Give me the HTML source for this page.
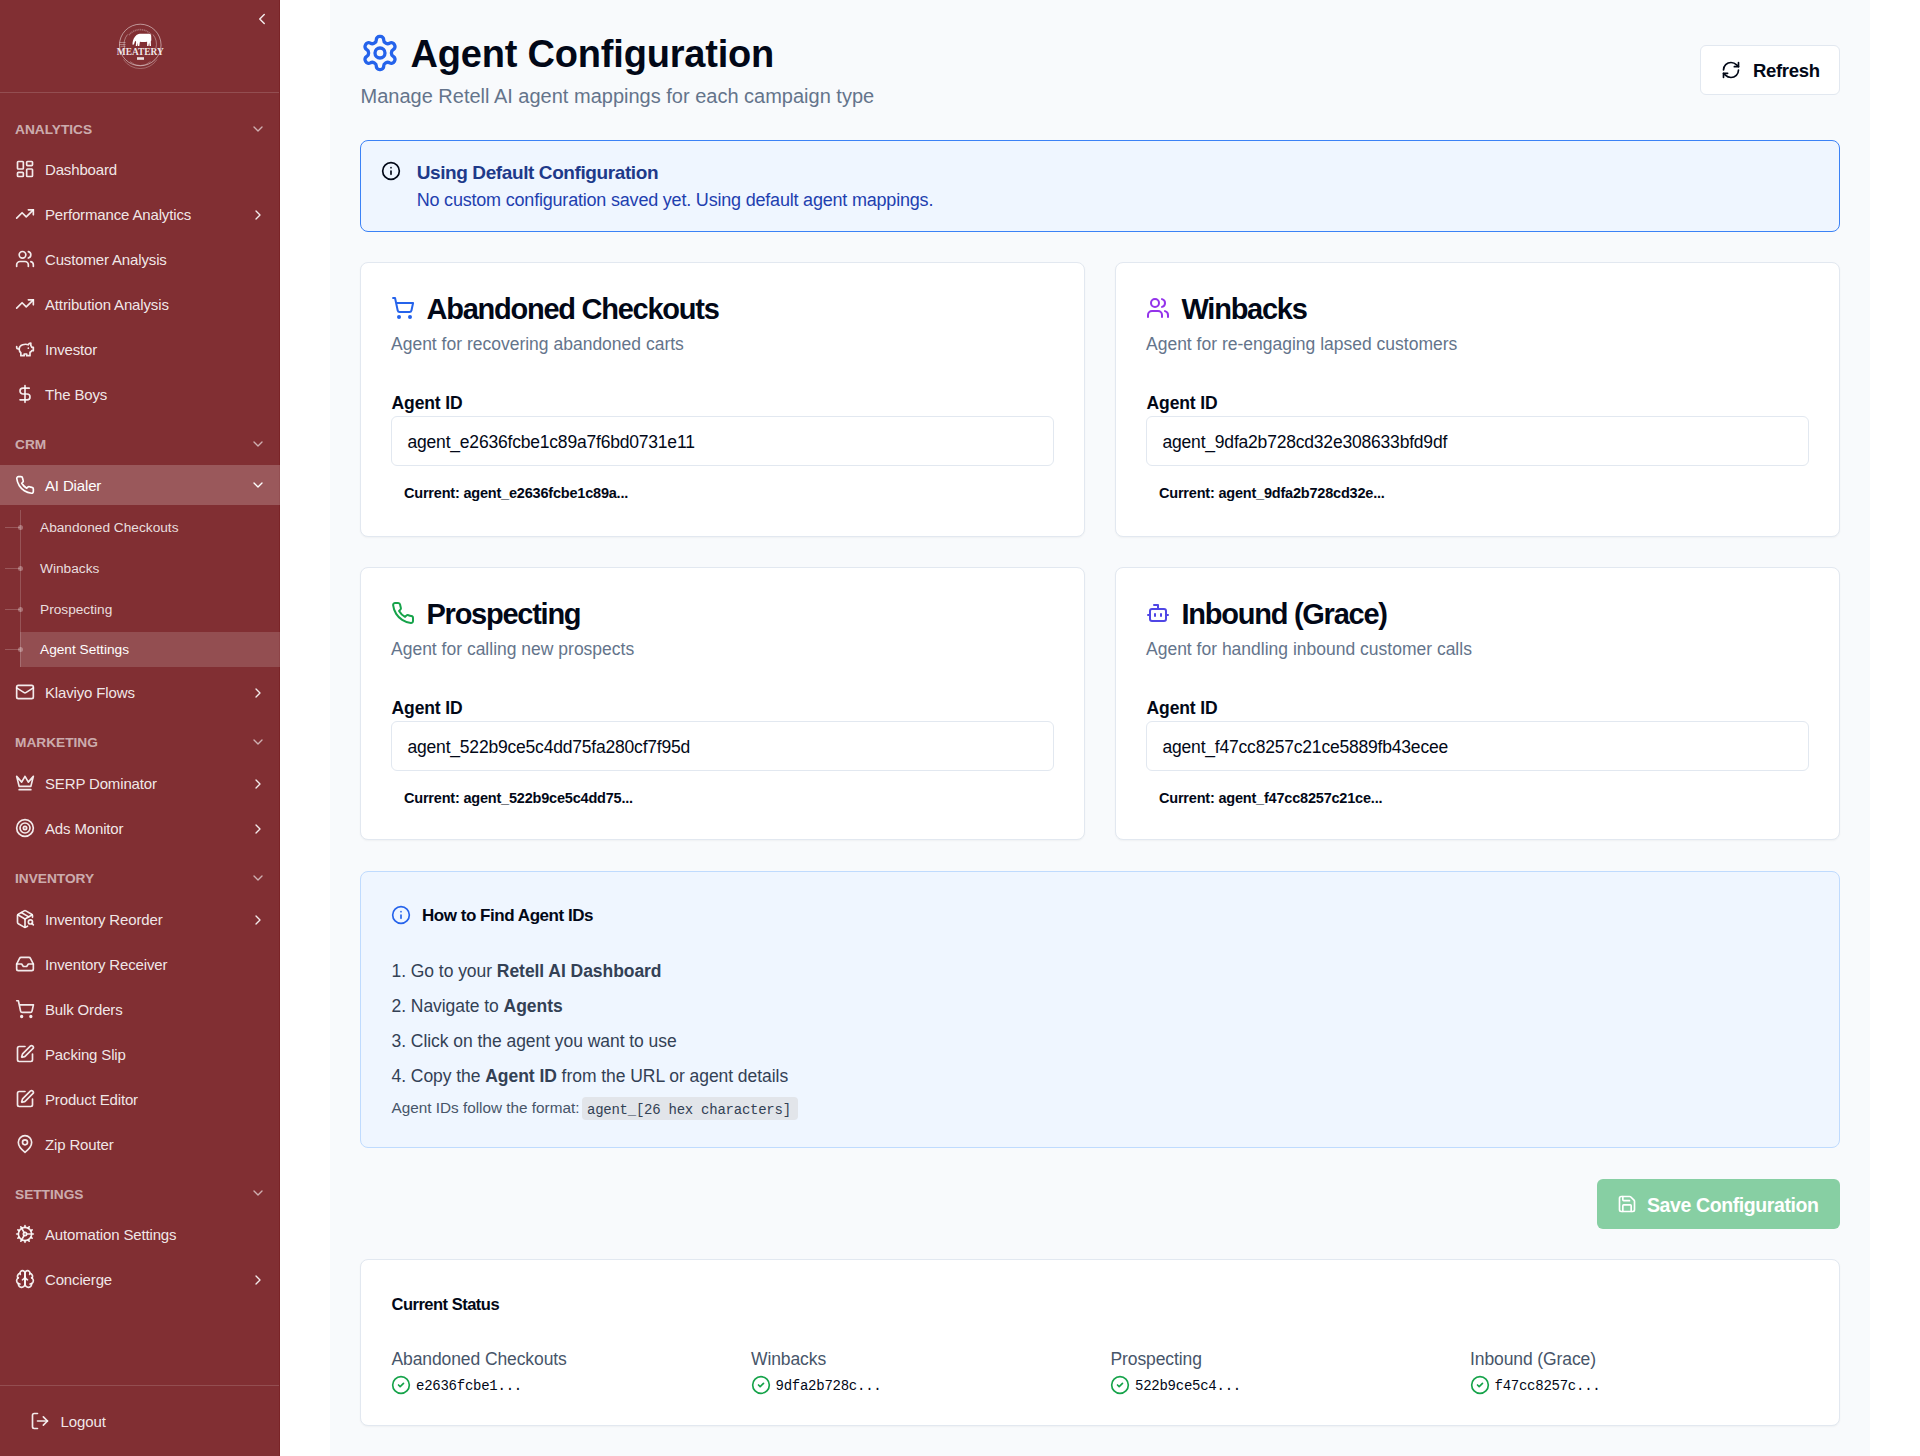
<!DOCTYPE html>
<html><head><meta charset="utf-8">
<style>
*{margin:0;padding:0;box-sizing:border-box}
html,body{width:1920px;height:1456px;overflow:hidden;background:#fff;font-family:"Liberation Sans",sans-serif;color:#020817}
svg.i{position:absolute;fill:none;stroke:currentColor;stroke-width:2;stroke-linecap:round;stroke-linejoin:round}
#sb{position:absolute;left:0;top:0;width:280px;height:1456px;background:#812f33;color:rgba(255,255,255,.9);overflow:hidden}
#main{position:absolute;left:330px;top:0;width:1540px;height:1456px;background:#f8fafc}
.t{position:absolute;white-space:nowrap}
.box{position:absolute}
.card{position:absolute;background:#fff;border:1px solid #e2e8f0;border-radius:8px;box-shadow:0 1px 2px rgba(0,0,0,.04)}
</style></head><body>

<div id="sb">
<svg class="i" style="left:253px;top:10px;color:rgba(255,255,255,.9);" width="18" height="18" viewBox="0 0 24 24" stroke-width="2"><path d="m15 18-6-6 6-6"/></svg>
<svg class="box" style="left:116px;top:21px" width="48" height="48" viewBox="0 0 48 48">
<circle cx="24.25" cy="24" r="20.8" fill="none" stroke="rgba(255,255,255,.55)" stroke-width="0.9"/>
<path d="M8.5 27 A16 16 0 0 1 11.5 13.5" fill="none" stroke="rgba(255,255,255,.45)" stroke-width="0.8"/>
<path d="M37 13.5 A16 16 0 0 1 40 27" fill="none" stroke="rgba(255,255,255,.45)" stroke-width="0.8"/>
<path d="M13 14 A14.5 14.5 0 0 1 35.5 14" fill="none" stroke="rgba(255,255,255,.3)" stroke-width="1.6" stroke-dasharray="1.2 0.6"/>
<path d="M20.5 14c1.2-1 2.8-1.3 4.8-1.3h7.6c1.4 0 2.2.7 2.3 2.2l.1 4.4-.5 1.2.2 4.5h-1.4l-.5-3.6-.6 3.6h-1.4v-4.3c-2.4.5-4.9.5-7.2.1l-.6 4.2h-1.4l-.1-3.3-.7 3.3h-1.3l.3-4.3-.9-.9c-.4 1.2-.9 2.6-1.2 3.5-.4.5-1.1.6-1.5.1l.1-1.8c.4-2.7 1.5-5.6 3.9-7.6z" fill="#fff"/>
<path d="M3.5 21.5h6M3.5 23.5h6M4.5 25.3h5" stroke="rgba(255,255,255,.45)" stroke-width="0.8"/>
<text x="24.3" y="34.4" text-anchor="middle" font-family="Liberation Serif" font-size="10.8" font-weight="bold" textLength="47" lengthAdjust="spacingAndGlyphs" fill="#fff" fill-opacity=".9">MEATERY</text>
<path d="M7.5 38.5 A20 20 0 0 0 41 38.5" fill="none" stroke="rgba(255,255,255,.35)" stroke-width="0.8"/>
<path d="M14 40.5 A15 15 0 0 0 34.5 40.5" fill="none" stroke="rgba(255,255,255,.35)" stroke-width="0.8"/>
<rect x="21" y="36.2" width="7" height="2.6" fill="rgba(255,255,255,.85)"/>
</svg>
<div class="box" style="left:0;top:92px;width:280px;height:1px;background:rgba(255,255,255,.15)"></div>
<div class="box" style="left:0;top:1385px;width:280px;height:1px;background:rgba(255,255,255,.15)"></div>
<div class="box" style="left:279px;top:0;width:1px;height:1456px;background:#7a2427"></div>
<div class="t" style="left:15px;top:121.25px;font-size:13.7px;line-height:18px;font-weight:bold;color:rgba(255,255,255,.62);">ANALYTICS</div>
<svg class="i" style="left:249.7px;top:120.7px;color:rgba(255,255,255,.62);" width="16" height="16" viewBox="0 0 24 24" stroke-width="1.5"><path d="m6 9 6 6 6-6"/></svg>
<svg class="i" style="left:15px;top:159.4px;color:rgba(255,255,255,.9);" width="20" height="20" viewBox="0 0 24 24" stroke-width="1.6"><rect width="7" height="9" x="3" y="3" rx="1"/><rect width="7" height="5" x="14" y="3" rx="1"/><rect width="7" height="9" x="14" y="12" rx="1"/><rect width="7" height="5" x="3" y="16" rx="1"/></svg>
<div class="t" style="left:45px;top:159.90px;font-size:15px;line-height:20px;color:rgba(255,255,255,.9);letter-spacing:-0.15px;">Dashboard</div>
<svg class="i" style="left:15px;top:204.3px;color:rgba(255,255,255,.9);" width="20" height="20" viewBox="0 0 24 24" stroke-width="1.6"><polyline points="22 7 13.5 15.5 8.5 10.5 2 17"/><polyline points="16 7 22 7 22 13"/></svg>
<div class="t" style="left:45px;top:204.80px;font-size:15px;line-height:20px;color:rgba(255,255,255,.9);letter-spacing:-0.15px;">Performance Analytics</div>
<svg class="i" style="left:250.2px;top:207.1px;color:rgba(255,255,255,.9);" width="16" height="16" viewBox="0 0 24 24" stroke-width="1.6"><path d="m9 18 6-6-6-6"/></svg>
<svg class="i" style="left:15px;top:249.3px;color:rgba(255,255,255,.9);" width="20" height="20" viewBox="0 0 24 24" stroke-width="1.6"><path d="M16 21v-2a4 4 0 0 0-4-4H6a4 4 0 0 0-4 4v2"/><circle cx="9" cy="7" r="4"/><path d="M22 21v-2a4 4 0 0 0-3-3.87"/><path d="M16 3.13a4 4 0 0 1 0 7.75"/></svg>
<div class="t" style="left:45px;top:249.80px;font-size:15px;line-height:20px;color:rgba(255,255,255,.9);letter-spacing:-0.15px;">Customer Analysis</div>
<svg class="i" style="left:15px;top:294.3px;color:rgba(255,255,255,.9);" width="20" height="20" viewBox="0 0 24 24" stroke-width="1.6"><polyline points="22 7 13.5 15.5 8.5 10.5 2 17"/><polyline points="16 7 22 7 22 13"/></svg>
<div class="t" style="left:45px;top:294.80px;font-size:15px;line-height:20px;color:rgba(255,255,255,.9);letter-spacing:-0.15px;">Attribution Analysis</div>
<svg class="i" style="left:15px;top:339.3px;color:rgba(255,255,255,.9);" width="20" height="20" viewBox="0 0 24 24" stroke-width="1.6"><path d="M19 5c-1.5 0-2.8 1.4-3 2-3.5-1.5-11-.3-11 5 0 1.8 0 3 2 4.5V20h4v-2h3v2h4v-4c1-.5 1.7-1 2-2h2v-4h-2c0-1-.5-1.5-1-2V5z"/><path d="M2 9v1c0 1.1.9 2 2 2h1"/><path d="M16 11h.01"/></svg>
<div class="t" style="left:45px;top:339.80px;font-size:15px;line-height:20px;color:rgba(255,255,255,.9);letter-spacing:-0.15px;">Investor</div>
<svg class="i" style="left:15px;top:384.3px;color:rgba(255,255,255,.9);" width="20" height="20" viewBox="0 0 24 24" stroke-width="1.6"><line x1="12" x2="12" y1="2" y2="22"/><path d="M17 5H9.5a3.5 3.5 0 0 0 0 7h5a3.5 3.5 0 0 1 0 7H6"/></svg>
<div class="t" style="left:45px;top:384.80px;font-size:15px;line-height:20px;color:rgba(255,255,255,.9);letter-spacing:-0.15px;">The Boys</div>
<div class="t" style="left:15px;top:436.25px;font-size:13.7px;line-height:18px;font-weight:bold;color:rgba(255,255,255,.62);">CRM</div>
<svg class="i" style="left:249.7px;top:435.7px;color:rgba(255,255,255,.62);" width="16" height="16" viewBox="0 0 24 24" stroke-width="1.5"><path d="m6 9 6 6 6-6"/></svg>
<div class="box" style="left:0;top:465px;width:280px;height:40px;background:rgba(255,255,255,.2)"></div>
<svg class="i" style="left:15px;top:475.3px;color:#fff;" width="20" height="20" viewBox="0 0 24 24" stroke-width="1.6"><path d="M22 16.92v3a2 2 0 0 1-2.18 2 19.79 19.79 0 0 1-8.63-3.07 19.5 19.5 0 0 1-6-6 19.79 19.79 0 0 1-3.07-8.67A2 2 0 0 1 4.11 2h3a2 2 0 0 1 2 1.72 12.84 12.84 0 0 0 .7 2.81 2 2 0 0 1-.45 2.11L8.09 9.91a16 16 0 0 0 6 6l1.27-1.27a2 2 0 0 1 2.11-.45 12.84 12.84 0 0 0 2.81.7A2 2 0 0 1 22 16.92z"/></svg>
<div class="t" style="left:45px;top:475.80px;font-size:15px;line-height:20px;color:#fff;letter-spacing:-0.15px;">AI Dialer</div>
<svg class="i" style="left:249.7px;top:476.7px;color:#fff;" width="16" height="16" viewBox="0 0 24 24" stroke-width="1.6"><path d="m6 9 6 6 6-6"/></svg>
<div class="box" style="left:20px;top:510px;width:1px;height:157px;background:rgba(255,255,255,.18)"></div>
<div class="box" style="left:20px;top:632px;width:260px;height:35px;background:rgba(255,255,255,.15)"></div>
<div class="box" style="left:5px;top:526.85px;width:15px;height:1.5px;background:rgba(255,255,255,.2)"></div>
<div class="box" style="left:18px;top:525.10px;width:5px;height:5px;border-radius:50%;background:rgba(255,255,255,.3)"></div>
<div class="t" style="left:40px;top:518.85px;font-size:13.7px;line-height:18px;color:rgba(255,255,255,.85);">Abandoned Checkouts</div>
<div class="box" style="left:5px;top:567.75px;width:15px;height:1.5px;background:rgba(255,255,255,.2)"></div>
<div class="box" style="left:18px;top:566.00px;width:5px;height:5px;border-radius:50%;background:rgba(255,255,255,.3)"></div>
<div class="t" style="left:40px;top:559.75px;font-size:13.7px;line-height:18px;color:rgba(255,255,255,.85);">Winbacks</div>
<div class="box" style="left:5px;top:608.75px;width:15px;height:1.5px;background:rgba(255,255,255,.2)"></div>
<div class="box" style="left:18px;top:607.00px;width:5px;height:5px;border-radius:50%;background:rgba(255,255,255,.3)"></div>
<div class="t" style="left:40px;top:600.75px;font-size:13.7px;line-height:18px;color:rgba(255,255,255,.85);">Prospecting</div>
<div class="box" style="left:5px;top:648.75px;width:15px;height:1.5px;background:rgba(255,255,255,.2)"></div>
<div class="box" style="left:18px;top:647.00px;width:5px;height:5px;border-radius:50%;background:rgba(255,255,255,.3)"></div>
<div class="t" style="left:40px;top:640.75px;font-size:13.7px;line-height:18px;color:#fff;">Agent Settings</div>
<svg class="i" style="left:15px;top:682.0px;color:rgba(255,255,255,.9);" width="20" height="20" viewBox="0 0 24 24" stroke-width="1.6"><rect width="20" height="16" x="2" y="4" rx="2"/><path d="m22 7-8.97 5.7a1.94 1.94 0 0 1-2.06 0L2 7"/></svg>
<div class="t" style="left:45px;top:682.50px;font-size:15px;line-height:20px;color:rgba(255,255,255,.9);letter-spacing:-0.15px;">Klaviyo Flows</div>
<svg class="i" style="left:250.2px;top:684.8000000000001px;color:rgba(255,255,255,.9);" width="16" height="16" viewBox="0 0 24 24" stroke-width="1.6"><path d="m9 18 6-6-6-6"/></svg>
<div class="t" style="left:15px;top:734.25px;font-size:13.7px;line-height:18px;font-weight:bold;color:rgba(255,255,255,.62);">MARKETING</div>
<svg class="i" style="left:249.7px;top:733.7px;color:rgba(255,255,255,.62);" width="16" height="16" viewBox="0 0 24 24" stroke-width="1.5"><path d="m6 9 6 6 6-6"/></svg>
<svg class="i" style="left:15px;top:773.0px;color:rgba(255,255,255,.9);" width="20" height="20" viewBox="0 0 24 24" stroke-width="1.6"><path d="m2 4 3 12h14l3-12-6 7-4-7-4 7-6-7z"/><path d="M5 20h14"/></svg>
<div class="t" style="left:45px;top:773.50px;font-size:15px;line-height:20px;color:rgba(255,255,255,.9);letter-spacing:-0.15px;">SERP Dominator</div>
<svg class="i" style="left:250.2px;top:775.8000000000001px;color:rgba(255,255,255,.9);" width="16" height="16" viewBox="0 0 24 24" stroke-width="1.6"><path d="m9 18 6-6-6-6"/></svg>
<svg class="i" style="left:15px;top:818.0px;color:rgba(255,255,255,.9);" width="20" height="20" viewBox="0 0 24 24" stroke-width="1.6"><circle cx="12" cy="12" r="10"/><circle cx="12" cy="12" r="6"/><circle cx="12" cy="12" r="2"/></svg>
<div class="t" style="left:45px;top:818.50px;font-size:15px;line-height:20px;color:rgba(255,255,255,.9);letter-spacing:-0.15px;">Ads Monitor</div>
<svg class="i" style="left:250.2px;top:820.8000000000001px;color:rgba(255,255,255,.9);" width="16" height="16" viewBox="0 0 24 24" stroke-width="1.6"><path d="m9 18 6-6-6-6"/></svg>
<div class="t" style="left:15px;top:870.05px;font-size:13.7px;line-height:18px;font-weight:bold;color:rgba(255,255,255,.62);">INVENTORY</div>
<svg class="i" style="left:249.7px;top:869.5px;color:rgba(255,255,255,.62);" width="16" height="16" viewBox="0 0 24 24" stroke-width="1.5"><path d="m6 9 6 6 6-6"/></svg>
<svg class="i" style="left:15px;top:909.3px;color:rgba(255,255,255,.9);" width="20" height="20" viewBox="0 0 24 24" stroke-width="1.6"><path d="M21 10V8a2 2 0 0 0-1-1.73l-7-4a2 2 0 0 0-2 0l-7 4A2 2 0 0 0 3 8v8a2 2 0 0 0 1 1.73l7 4a2 2 0 0 0 2 0l2-1.14"/><path d="m7.5 4.27 9 5.15"/><polyline points="3.29 7 12 12 20.71 7"/><line x1="12" x2="12" y1="22" y2="12"/><circle cx="18.5" cy="15.5" r="2.5"/><path d="M20.27 17.27 22 19"/></svg>
<div class="t" style="left:45px;top:909.80px;font-size:15px;line-height:20px;color:rgba(255,255,255,.9);letter-spacing:-0.15px;">Inventory Reorder</div>
<svg class="i" style="left:250.2px;top:912.1px;color:rgba(255,255,255,.9);" width="16" height="16" viewBox="0 0 24 24" stroke-width="1.6"><path d="m9 18 6-6-6-6"/></svg>
<svg class="i" style="left:15px;top:954.3px;color:rgba(255,255,255,.9);" width="20" height="20" viewBox="0 0 24 24" stroke-width="1.6"><polyline points="22 12 16 12 14 15 10 15 8 12 2 12"/><path d="M5.45 5.11 2 12v6a2 2 0 0 0 2 2h16a2 2 0 0 0 2-2v-6l-3.45-6.89A2 2 0 0 0 16.76 4H7.24a2 2 0 0 0-1.79 1.11z"/></svg>
<div class="t" style="left:45px;top:954.80px;font-size:15px;line-height:20px;color:rgba(255,255,255,.9);letter-spacing:-0.15px;">Inventory Receiver</div>
<svg class="i" style="left:15px;top:999.3px;color:rgba(255,255,255,.9);" width="20" height="20" viewBox="0 0 24 24" stroke-width="1.6"><circle cx="8" cy="21" r="1"/><circle cx="19" cy="21" r="1"/><path d="M2.05 2.05h2l2.66 12.42a2 2 0 0 0 2 1.58h9.78a2 2 0 0 0 1.95-1.57l1.65-7.43H5.12"/></svg>
<div class="t" style="left:45px;top:999.80px;font-size:15px;line-height:20px;color:rgba(255,255,255,.9);letter-spacing:-0.15px;">Bulk Orders</div>
<svg class="i" style="left:15px;top:1044.3px;color:rgba(255,255,255,.9);" width="20" height="20" viewBox="0 0 24 24" stroke-width="1.6"><path d="M12 3H5a2 2 0 0 0-2 2v14a2 2 0 0 0 2 2h14a2 2 0 0 0 2-2v-7"/><path d="M18.375 2.625a1 1 0 0 1 3 3l-9.013 9.014a2 2 0 0 1-.853.505l-2.873.84a.5.5 0 0 1-.62-.62l.84-2.873a2 2 0 0 1 .506-.852z"/></svg>
<div class="t" style="left:45px;top:1044.80px;font-size:15px;line-height:20px;color:rgba(255,255,255,.9);letter-spacing:-0.15px;">Packing Slip</div>
<svg class="i" style="left:15px;top:1089.3px;color:rgba(255,255,255,.9);" width="20" height="20" viewBox="0 0 24 24" stroke-width="1.6"><path d="M12 3H5a2 2 0 0 0-2 2v14a2 2 0 0 0 2 2h14a2 2 0 0 0 2-2v-7"/><path d="M18.375 2.625a1 1 0 0 1 3 3l-9.013 9.014a2 2 0 0 1-.853.505l-2.873.84a.5.5 0 0 1-.62-.62l.84-2.873a2 2 0 0 1 .506-.852z"/></svg>
<div class="t" style="left:45px;top:1089.80px;font-size:15px;line-height:20px;color:rgba(255,255,255,.9);letter-spacing:-0.15px;">Product Editor</div>
<svg class="i" style="left:15px;top:1134.0px;color:rgba(255,255,255,.9);" width="20" height="20" viewBox="0 0 24 24" stroke-width="1.6"><path d="M20 10c0 6-8 12-8 12s-8-6-8-12a8 8 0 0 1 16 0Z"/><circle cx="12" cy="10" r="3"/></svg>
<div class="t" style="left:45px;top:1134.50px;font-size:15px;line-height:20px;color:rgba(255,255,255,.9);letter-spacing:-0.15px;">Zip Router</div>
<div class="t" style="left:15px;top:1185.95px;font-size:13.7px;line-height:18px;font-weight:bold;color:rgba(255,255,255,.62);">SETTINGS</div>
<svg class="i" style="left:249.7px;top:1185.4px;color:rgba(255,255,255,.62);" width="16" height="16" viewBox="0 0 24 24" stroke-width="1.5"><path d="m6 9 6 6 6-6"/></svg>
<svg class="i" style="left:15px;top:1224.0px;color:rgba(255,255,255,.9);" width="20" height="20" viewBox="0 0 24 24" stroke-width="1.6"><path d="M12 20a8 8 0 1 0 0-16 8 8 0 0 0 0 16Z"/><path d="M12 14a2 2 0 1 0 0-4 2 2 0 0 0 0 4Z"/><path d="M12 2v2"/><path d="M12 22v-2"/><path d="m17 20.66-1-1.73"/><path d="M11 10.27 7 3.34"/><path d="m20.66 17-1.73-1"/><path d="m3.34 7 1.73 1"/><path d="M14 12h8"/><path d="M2 12h2"/><path d="m20.66 7-1.73 1"/><path d="m3.34 17 1.73-1"/><path d="m17 3.34-1 1.73"/><path d="m11 13.73-4 6.93"/></svg>
<div class="t" style="left:45px;top:1224.50px;font-size:15px;line-height:20px;color:rgba(255,255,255,.9);letter-spacing:-0.15px;">Automation Settings</div>
<svg class="i" style="left:15px;top:1269.2px;color:rgba(255,255,255,.9);" width="20" height="20" viewBox="0 0 24 24" stroke-width="1.6"><path d="M12 5a3 3 0 1 0-5.997.125 4 4 0 0 0-2.526 5.77 4 4 0 0 0 .556 6.588A4 4 0 1 0 12 18Z"/><path d="M12 5a3 3 0 1 1 5.997.125 4 4 0 0 1 2.526 5.77 4 4 0 0 1-.556 6.588A4 4 0 1 1 12 18Z"/><path d="M15 13a4.5 4.5 0 0 1-3-4 4.5 4.5 0 0 1-3 4"/><path d="M17.599 6.5a3 3 0 0 0 .399-1.375"/><path d="M6.003 5.125A3 3 0 0 0 6.401 6.5"/><path d="M3.477 10.896a4 4 0 0 1 .585-.396"/><path d="M19.938 10.5a4 4 0 0 1 .585.396"/><path d="M6 18a4 4 0 0 1-1.967-.516"/><path d="M19.967 17.484A4 4 0 0 1 18 18"/></svg>
<div class="t" style="left:45px;top:1269.70px;font-size:15px;line-height:20px;color:rgba(255,255,255,.9);letter-spacing:-0.15px;">Concierge</div>
<svg class="i" style="left:250.2px;top:1272.0px;color:rgba(255,255,255,.9);" width="16" height="16" viewBox="0 0 24 24" stroke-width="1.6"><path d="m9 18 6-6-6-6"/></svg>
<svg class="i" style="left:29.8px;top:1411.1px;color:rgba(255,255,255,.9);" width="20" height="20" viewBox="0 0 24 24" stroke-width="1.6"><path d="M9 21H5a2 2 0 0 1-2-2V5a2 2 0 0 1 2-2h4"/><polyline points="16 17 21 12 16 7"/><line x1="21" x2="9" y1="12" y2="12"/></svg>
<div class="t" style="left:60.6px;top:1411.90px;font-size:15px;line-height:20px;color:rgba(255,255,255,.9);letter-spacing:-0.1px;">Logout</div>
</div>
<div id="main"></div>
<svg class="i" style="left:360px;top:33px;color:#2563eb;" width="40" height="40" viewBox="0 0 24 24" stroke-width="2"><path d="M12.22 2h-.44a2 2 0 0 0-2 2v.18a2 2 0 0 1-1 1.73l-.43.25a2 2 0 0 1-2 0l-.15-.08a2 2 0 0 0-2.73.73l-.22.38a2 2 0 0 0 .73 2.73l.15.1a2 2 0 0 1 1 1.72v.51a2 2 0 0 1-1 1.74l-.15.09a2 2 0 0 0-.73 2.73l.22.38a2 2 0 0 0 2.73.73l.15-.08a2 2 0 0 1 2 0l.43.25a2 2 0 0 1 1 1.73V20a2 2 0 0 0 2 2h.44a2 2 0 0 0 2-2v-.18a2 2 0 0 1 1-1.73l.43-.25a2 2 0 0 1 2 0l.15.08a2 2 0 0 0 2.73-.73l.22-.39a2 2 0 0 0-.73-2.73l-.15-.08a2 2 0 0 1-1-1.74v-.5a2 2 0 0 1 1-1.74l.15-.09a2 2 0 0 0 .73-2.73l-.22-.38a2 2 0 0 0-2.73-.73l-.15.08a2 2 0 0 1-2 0l-.43-.25a2 2 0 0 1-1-1.73V4a2 2 0 0 0-2-2z"/><circle cx="12" cy="12" r="3"/></svg>
<div class="t" style="left:410.6px;top:31.33px;font-size:38px;line-height:46px;font-weight:bold;color:#020817;letter-spacing:-0.2px;">Agent Configuration</div>
<div class="t" style="left:360.5px;top:81.57px;font-size:20px;line-height:28px;color:#64748b;">Manage Retell AI agent mappings for each campaign type</div>
<div class="box" style="left:1700px;top:45px;width:140px;height:50px;background:#fff;border:1px solid #e2e8f0;border-radius:6px"></div>
<svg class="i" style="left:1721px;top:60px;color:#020817;" width="20" height="20" viewBox="0 0 24 24" stroke-width="2"><path d="M3 12a9 9 0 0 1 9-9 9.75 9.75 0 0 1 6.74 2.74L21 8"/><path d="M21 3v5h-5"/><path d="M21 12a9 9 0 0 1-9 9 9.75 9.75 0 0 1-6.74-2.74L3 16"/><path d="M8 16H3v5"/></svg>
<div class="t" style="left:1752.9px;top:59.49px;font-size:18.5px;line-height:24px;font-weight:bold;color:#020817;letter-spacing:-0.3px;">Refresh</div>
<div class="box" style="left:360px;top:140px;width:1480px;height:92px;background:#eff6ff;border:1px solid #3b82f6;border-radius:8px"></div>
<svg class="i" style="left:380.8px;top:160.8px;color:#020817;" width="20" height="20" viewBox="0 0 24 24" stroke-width="2"><circle cx="12" cy="12" r="10"/><path d="M12 16v-4"/><path d="M12 8h.01"/></svg>
<div class="t" style="left:416.7px;top:159.62px;font-size:19px;line-height:26px;font-weight:bold;color:#1e3a8a;letter-spacing:-0.4px;">Using Default Configuration</div>
<div class="t" style="left:416.7px;top:186.56px;font-size:18px;line-height:26px;color:#1e40af;letter-spacing:-0.2px;">No custom configuration saved yet. Using default agent mappings.</div>
<div class="card" style="left:360px;top:262px;width:725px;height:275px"></div>
<svg class="i" style="left:391px;top:296px;color:#2563eb;" width="24" height="24" viewBox="0 0 24 24" stroke-width="2"><circle cx="8" cy="21" r="1"/><circle cx="19" cy="21" r="1"/><path d="M2.05 2.05h2l2.66 12.42a2 2 0 0 0 2 1.58h9.78a2 2 0 0 0 1.95-1.57l1.65-7.43H5.12"/></svg>
<div class="t" style="left:426.5px;top:292.45px;font-size:29px;line-height:34px;font-weight:bold;color:#020817;letter-spacing:-1.25px;">Abandoned Checkouts</div>
<div class="t" style="left:391px;top:331.94px;font-size:17.5px;line-height:24px;color:#64748b;">Agent for recovering abandoned carts</div>
<div class="t" style="left:391.5px;top:390.94px;font-size:17.5px;line-height:24px;font-weight:bold;color:#020817;letter-spacing:-0.1px;">Agent ID</div>
<div class="box" style="left:391px;top:416px;width:663px;height:50px;background:#fff;border:1px solid #e2e8f0;border-radius:6px"></div>
<div class="t" style="left:407.5px;top:429.64px;font-size:17.5px;line-height:24px;color:#020817;letter-spacing:-0.2px;">agent_e2636fcbe1c89a7f6bd0731e11</div>
<div class="t" style="left:404px;top:483.48px;font-size:14.5px;line-height:20px;font-weight:bold;color:#020817;letter-spacing:-0.2px;">Current: agent_e2636fcbe1c89a...</div>
<div class="card" style="left:1115px;top:262px;width:725px;height:275px"></div>
<svg class="i" style="left:1146px;top:296px;color:#9333ea;" width="24" height="24" viewBox="0 0 24 24" stroke-width="2"><path d="M16 21v-2a4 4 0 0 0-4-4H6a4 4 0 0 0-4 4v2"/><circle cx="9" cy="7" r="4"/><path d="M22 21v-2a4 4 0 0 0-3-3.87"/><path d="M16 3.13a4 4 0 0 1 0 7.75"/></svg>
<div class="t" style="left:1181.5px;top:292.45px;font-size:29px;line-height:34px;font-weight:bold;color:#020817;letter-spacing:-1.25px;">Winbacks</div>
<div class="t" style="left:1146px;top:331.94px;font-size:17.5px;line-height:24px;color:#64748b;">Agent for re-engaging lapsed customers</div>
<div class="t" style="left:1146.5px;top:390.94px;font-size:17.5px;line-height:24px;font-weight:bold;color:#020817;letter-spacing:-0.1px;">Agent ID</div>
<div class="box" style="left:1146px;top:416px;width:663px;height:50px;background:#fff;border:1px solid #e2e8f0;border-radius:6px"></div>
<div class="t" style="left:1162.5px;top:429.64px;font-size:17.5px;line-height:24px;color:#020817;letter-spacing:-0.2px;">agent_9dfa2b728cd32e308633bfd9df</div>
<div class="t" style="left:1159px;top:483.48px;font-size:14.5px;line-height:20px;font-weight:bold;color:#020817;letter-spacing:-0.2px;">Current: agent_9dfa2b728cd32e...</div>
<div class="card" style="left:360px;top:567px;width:725px;height:273px"></div>
<svg class="i" style="left:391px;top:601px;color:#16a34a;" width="24" height="24" viewBox="0 0 24 24" stroke-width="2"><path d="M22 16.92v3a2 2 0 0 1-2.18 2 19.79 19.79 0 0 1-8.63-3.07 19.5 19.5 0 0 1-6-6 19.79 19.79 0 0 1-3.07-8.67A2 2 0 0 1 4.11 2h3a2 2 0 0 1 2 1.72 12.84 12.84 0 0 0 .7 2.81 2 2 0 0 1-.45 2.11L8.09 9.91a16 16 0 0 0 6 6l1.27-1.27a2 2 0 0 1 2.11-.45 12.84 12.84 0 0 0 2.81.7A2 2 0 0 1 22 16.92z"/></svg>
<div class="t" style="left:426.5px;top:597.45px;font-size:29px;line-height:34px;font-weight:bold;color:#020817;letter-spacing:-1.25px;">Prospecting</div>
<div class="t" style="left:391px;top:636.94px;font-size:17.5px;line-height:24px;color:#64748b;">Agent for calling new prospects</div>
<div class="t" style="left:391.5px;top:695.94px;font-size:17.5px;line-height:24px;font-weight:bold;color:#020817;letter-spacing:-0.1px;">Agent ID</div>
<div class="box" style="left:391px;top:721px;width:663px;height:50px;background:#fff;border:1px solid #e2e8f0;border-radius:6px"></div>
<div class="t" style="left:407.5px;top:734.64px;font-size:17.5px;line-height:24px;color:#020817;letter-spacing:-0.2px;">agent_522b9ce5c4dd75fa280cf7f95d</div>
<div class="t" style="left:404px;top:788.48px;font-size:14.5px;line-height:20px;font-weight:bold;color:#020817;letter-spacing:-0.2px;">Current: agent_522b9ce5c4dd75...</div>
<div class="card" style="left:1115px;top:567px;width:725px;height:273px"></div>
<svg class="i" style="left:1146px;top:601px;color:#4f46e5;" width="24" height="24" viewBox="0 0 24 24" stroke-width="2"><path d="M12 8V4H8"/><rect width="16" height="12" x="4" y="8" rx="2"/><path d="M2 14h2"/><path d="M20 14h2"/><path d="M15 13v2"/><path d="M9 13v2"/></svg>
<div class="t" style="left:1181.5px;top:597.45px;font-size:29px;line-height:34px;font-weight:bold;color:#020817;letter-spacing:-1.25px;">Inbound (Grace)</div>
<div class="t" style="left:1146px;top:636.94px;font-size:17.5px;line-height:24px;color:#64748b;">Agent for handling inbound customer calls</div>
<div class="t" style="left:1146.5px;top:695.94px;font-size:17.5px;line-height:24px;font-weight:bold;color:#020817;letter-spacing:-0.1px;">Agent ID</div>
<div class="box" style="left:1146px;top:721px;width:663px;height:50px;background:#fff;border:1px solid #e2e8f0;border-radius:6px"></div>
<div class="t" style="left:1162.5px;top:734.64px;font-size:17.5px;line-height:24px;color:#020817;letter-spacing:-0.2px;">agent_f47cc8257c21ce5889fb43ecee</div>
<div class="t" style="left:1159px;top:788.48px;font-size:14.5px;line-height:20px;font-weight:bold;color:#020817;letter-spacing:-0.2px;">Current: agent_f47cc8257c21ce...</div>
<div class="box" style="left:360px;top:871px;width:1480px;height:277px;background:#eff6ff;border:1px solid #bfdbfe;border-radius:8px"></div>
<svg class="i" style="left:391px;top:905px;color:#2563eb;" width="20" height="20" viewBox="0 0 24 24" stroke-width="2"><circle cx="12" cy="12" r="10"/><path d="M12 16v-4"/><path d="M12 8h.01"/></svg>
<div class="t" style="left:421.9px;top:904.01px;font-size:17px;line-height:24px;font-weight:bold;color:#020817;letter-spacing:-0.45px;">How to Find Agent IDs</div>
<div class="t" style="left:391.5px;top:958.84px;font-size:17.5px;line-height:24px;color:#334155;letter-spacing:-0.05px;">1. Go to your <b>Retell AI Dashboard</b></div>
<div class="t" style="left:391.5px;top:994.04px;font-size:17.5px;line-height:24px;color:#334155;letter-spacing:-0.05px;">2. Navigate to <b>Agents</b></div>
<div class="t" style="left:391.5px;top:1029.24px;font-size:17.5px;line-height:24px;color:#334155;letter-spacing:-0.05px;">3. Click on the agent you want to use</div>
<div class="t" style="left:391.5px;top:1064.44px;font-size:17.5px;line-height:24px;color:#334155;letter-spacing:-0.05px;">4. Copy the <b>Agent ID</b> from the URL or agent details</div>
<div class="t" style="left:391.5px;top:1098.10px;font-size:15.3px;line-height:20px;color:#475569;">Agent IDs follow the format:</div>
<div class="box" style="left:582px;top:1097.4px;width:215.5px;height:22.2px;background:#e2e5ea;border-radius:4px"></div>
<div class="t" style="left:587px;top:1100.87px;font-size:14px;line-height:18px;color:#334155;letter-spacing:-0.25px;font-family:'Liberation Mono',monospace;">agent_[26 hex characters]</div>
<div class="box" style="left:1597px;top:1179px;width:243px;height:50px;background:#16a34a;opacity:.5;border-radius:6px"></div>
<svg class="i" style="left:1617px;top:1194px;color:#fff;" width="20" height="20" viewBox="0 0 24 24" stroke-width="2"><path d="M15.2 3a2 2 0 0 1 1.4.6l3.8 3.8a2 2 0 0 1 .6 1.4V19a2 2 0 0 1-2 2H5a2 2 0 0 1-2-2V5a2 2 0 0 1 2-2z"/><path d="M17 21v-7a1 1 0 0 0-1-1H8a1 1 0 0 0-1 1v7"/><path d="M7 3v4a1 1 0 0 0 1 1h7"/></svg>
<div class="t" style="left:1647px;top:1193.44px;font-size:19.5px;line-height:24px;font-weight:bold;color:#fff;letter-spacing:-0.4px;">Save Configuration</div>
<div class="card" style="left:360px;top:1259px;width:1480px;height:167px"></div>
<div class="t" style="left:391.5px;top:1293.03px;font-size:16.5px;line-height:22px;font-weight:bold;color:#020817;letter-spacing:-0.5px;">Current Status</div>
<div class="t" style="left:391.5px;top:1346.54px;font-size:17.5px;line-height:24px;color:#475569;letter-spacing:-0.1px;">Abandoned Checkouts</div>
<svg class="i" style="left:391.0px;top:1375px;color:#16a34a;" width="20" height="20" viewBox="0 0 24 24" stroke-width="2"><circle cx="12" cy="12" r="10"/><path d="m9 12 2 2 4-4"/></svg>
<div class="t" style="left:416.0px;top:1377.02px;font-size:14px;line-height:18px;color:#020817;letter-spacing:-0.25px;font-family:'Liberation Mono',monospace;">e2636fcbe1...</div>
<div class="t" style="left:751px;top:1346.54px;font-size:17.5px;line-height:24px;color:#475569;letter-spacing:-0.1px;">Winbacks</div>
<svg class="i" style="left:750.5px;top:1375px;color:#16a34a;" width="20" height="20" viewBox="0 0 24 24" stroke-width="2"><circle cx="12" cy="12" r="10"/><path d="m9 12 2 2 4-4"/></svg>
<div class="t" style="left:775.5px;top:1377.02px;font-size:14px;line-height:18px;color:#020817;letter-spacing:-0.25px;font-family:'Liberation Mono',monospace;">9dfa2b728c...</div>
<div class="t" style="left:1110.5px;top:1346.54px;font-size:17.5px;line-height:24px;color:#475569;letter-spacing:-0.1px;">Prospecting</div>
<svg class="i" style="left:1110.0px;top:1375px;color:#16a34a;" width="20" height="20" viewBox="0 0 24 24" stroke-width="2"><circle cx="12" cy="12" r="10"/><path d="m9 12 2 2 4-4"/></svg>
<div class="t" style="left:1135.0px;top:1377.02px;font-size:14px;line-height:18px;color:#020817;letter-spacing:-0.25px;font-family:'Liberation Mono',monospace;">522b9ce5c4...</div>
<div class="t" style="left:1470px;top:1346.54px;font-size:17.5px;line-height:24px;color:#475569;letter-spacing:-0.1px;">Inbound (Grace)</div>
<svg class="i" style="left:1469.5px;top:1375px;color:#16a34a;" width="20" height="20" viewBox="0 0 24 24" stroke-width="2"><circle cx="12" cy="12" r="10"/><path d="m9 12 2 2 4-4"/></svg>
<div class="t" style="left:1494.5px;top:1377.02px;font-size:14px;line-height:18px;color:#020817;letter-spacing:-0.25px;font-family:'Liberation Mono',monospace;">f47cc8257c...</div>
</body></html>
